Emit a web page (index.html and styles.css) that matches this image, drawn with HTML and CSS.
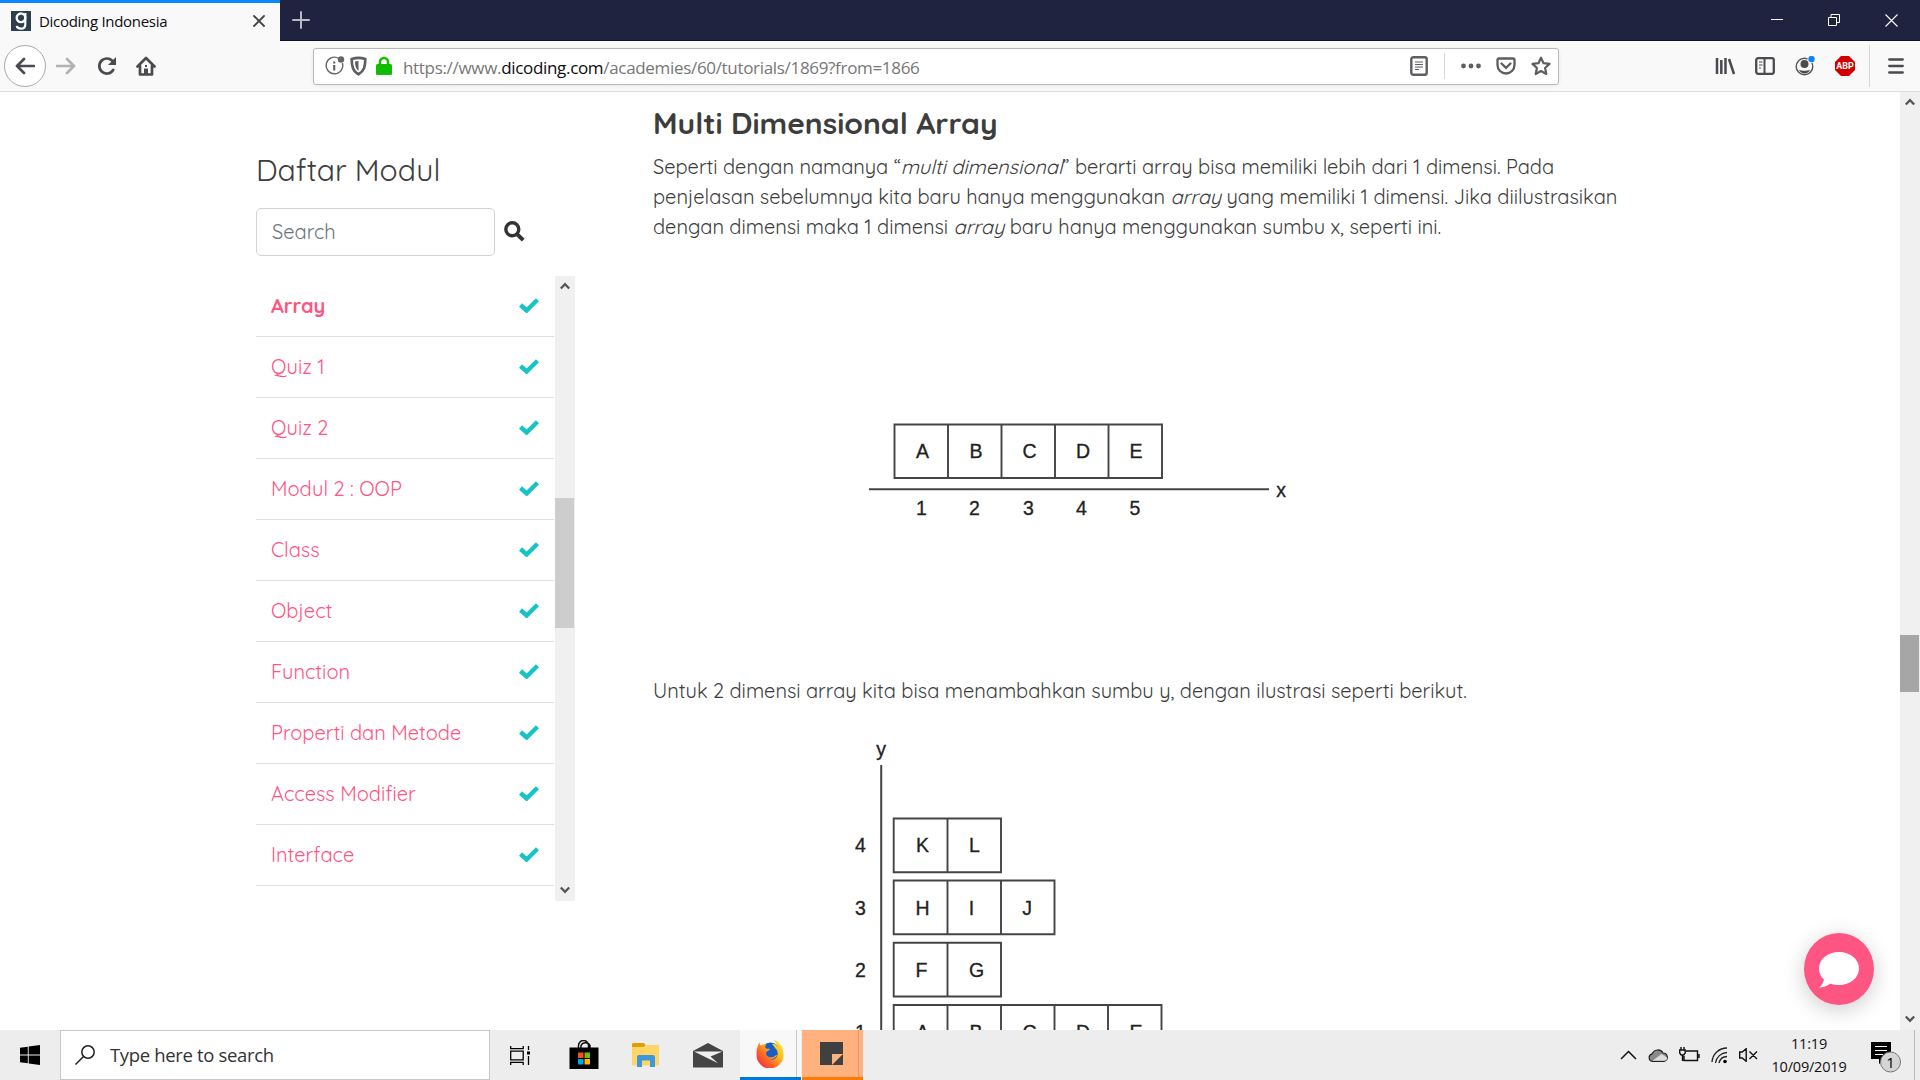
FILE: index.html
```html
<!DOCTYPE html>
<html lang="id">
<head>
<meta charset="utf-8">
<title>Dicoding Indonesia</title>
<link rel="stylesheet" href="styles.css">
</head>
<body>
<svg width="0" height="0" class="defs">
  <symbol id="check" viewBox="0 0 20 15"><path d="M1.500 7 7.600 12.500 18.500 1.700" fill="none" stroke="#16c3c6" stroke-width="4.400"/></symbol>
  <symbol id="up" viewBox="0 0 10 8"><path d="M.8 6.500 5 2.200 9.200 6.500" fill="none" stroke="#555" stroke-width="2.300"/></symbol>
</svg>
<header class="tabs">
  <div class="tab">
    <svg class="favicon" viewBox="0 0 20 20"><rect width="20" height="20" fill="#2d3e50"/><circle cx="10" cy="6.8" r="4.3" fill="none" stroke="#fff" stroke-width="2.4"/><path d="M14.3 2v11.5c0 3-1.8 4.2-4.3 4.2s-4-1-4.2-2.8" fill="none" stroke="#fff" stroke-width="2.2"/></svg>
    <span class="tab-title">Dicoding Indonesia</span>
    <svg class="tab-close" viewBox="0 0 12 12"><path d="M1 1l10 10M11 1 1 11" stroke="#444" stroke-width="1.8" stroke-linecap="round"/></svg>
  </div>
  <svg class="plus" viewBox="0 0 18 18"><path d="M9 1v16M1 9h16" stroke="#b9b9c4" stroke-width="2" stroke-linecap="round"/></svg>
  <div class="window-buttons">
    <svg width="12" height="12" viewBox="0 0 12 12"><path d="M0 5.5h12" stroke="#fff"/></svg>
    <svg width="12" height="12" viewBox="0 0 12 12"><path d="M.5 3.5h8v8h-8zM3 3V.5h8.500v8H9" fill="none" stroke="#fff"/></svg>
    <svg width="13" height="13" viewBox="0 0 13 13"><path d="M.5.5l12 12M12.500.5l-12 12" stroke="#fff" stroke-width="1.1"/></svg>
  </div>
</header>
<nav class="toolbar">
  <div class="back"><svg width="20" height="18" viewBox="0 0 20 18"><path d="M19 9H2M9 2 2 9l7 7" class="line"/></svg></div>
  <svg class="forward" width="20" height="18" viewBox="0 0 20 18"><path d="M1 9h17M11 2l7 7-7 7" class="line"/></svg>
  <svg class="reload" width="20" height="20" viewBox="0 0 20 20"><path d="M16.200 14a7.500 7.500 0 1 1 .5-7" class="line"/><path d="M19 1v8h-8z" fill="#4a4a4f"/></svg>
  <svg class="home" width="20" height="20" viewBox="0 0 20 20"><path d="M1.500 10.500 10 2l8.500 8.500M4 10v8.500h12V10" class="line"/><path d="M8 18v-5.500h4V18z" fill="#4a4a4f"/><path d="M9 10h2" stroke="#4a4a4f" stroke-width="2"/></svg>
  <div class="url-bar">
    <svg width="20" height="20" viewBox="0 0 20 20"><path d="M14 2.500A8.300 8.300 0 1 0 17.400 7" fill="none" stroke="#666" stroke-width="1.400"/><circle cx="16" cy="3.500" r="3.200" fill="#666"/><path d="M9.200 5.500v2M9.200 9v5.500" stroke="#666" stroke-width="2.200"/></svg>
    <svg class="shield" width="17" height="20" viewBox="0 0 17 20"><path d="M8.500 1.800c2.500 0 4.600.5 6.800 1.300 0 7-1 12-6.800 15.200C2.700 15.100 1.700 10.100 1.700 3.100c2.200-.8 4.300-1.300 6.800-1.300z" fill="none" stroke="#5e5e62" stroke-width="2.700"/><path d="M8.500 5v10C6 13 5 10 5 5.500z" fill="#5e5e62"/></svg>
    <svg class="lock" width="16" height="20" viewBox="0 0 16 20"><path d="M4 10V6a4 4 0 0 1 8 0v4" fill="none" stroke="#12bc00" stroke-width="2.500"/><rect y="8" width="16" height="11" rx="1.500" fill="#12bc00"/></svg>
    <span class="url">https://www.<b>dicoding.com</b>/academies/60/tutorials/1869?from=1866</span>
    <svg class="reader" width="18" height="20" viewBox="0 0 18 20"><rect x="1.300" y="1.300" width="15.400" height="17.400" rx="2" fill="none" stroke="#5e5e62" stroke-width="2.400"/><path d="M5 6h8M5 8.500h8M5 11h8M5 13.500h4" stroke="#5e5e62" stroke-width="1.200"/></svg>
    <i class="divider"></i>
    <svg class="dots" width="20" height="6" viewBox="0 0 20 6"><g fill="#5e5e62"><circle cx="2.500" cy="3" r="2.400"/><circle cx="10" cy="3" r="2.400"/><circle cx="17.500" cy="3" r="2.400"/></g></svg>
    <svg class="pocket" width="20" height="18" viewBox="0 0 20 18"><path d="M3 1.500h14q1.500 0 1.500 1.500v5a8.500 8.500 0 0 1-17 0V3Q1.500 1.500 3 1.500zM5.500 6.500 10 10.800l4.500-4.300" fill="none" stroke="#5e5e62" stroke-width="2.300" stroke-linecap="round"/></svg>
    <svg class="star" width="20" height="20" viewBox="0 0 20 20"><path d="M10 1.700l2.500 5.500 6 .7-4.400 4.100 1.200 6-5.300-3-5.300 3 1.200-6L1.500 7.900l6-.7z" fill="none" stroke="#5e5e62" stroke-width="2.200" stroke-linejoin="round"/></svg>
  </div>
  <div class="tools">
    <svg width="20" height="18" viewBox="0 0 20 18"><path d="M2 1v16M6.300 3v14M10.500 1v16M14 2l5 15" stroke="#4a4a4f" stroke-width="2.500" fill="none"/></svg>
    <svg width="20" height="18" viewBox="0 0 20 18"><rect x="1.200" y="1.200" width="17.600" height="15.600" rx="2" fill="none" stroke="#4a4a4f" stroke-width="2.300"/><path d="M9.500 1v16" stroke="#4a4a4f" stroke-width="2"/><path d="M4 5h3.500M4 8h3.500M4 11h2" stroke="#4a4a4f" stroke-width="1.200"/></svg>
    <svg width="20" height="20" viewBox="0 0 20 20"><circle cx="9.500" cy="10.500" r="8.300" fill="none" stroke="#555" stroke-width="1.400"/><circle cx="9.500" cy="8" r="4" fill="#4a4a4f"/><path d="M4 14c3 1 8 1 11 0-1 2.300-3 3.500-5.500 3.500S5 16.300 4 14z" fill="#4a4a4f"/><circle cx="16.500" cy="3" r="4" fill="#f9f9fa"/><circle cx="16.500" cy="3" r="3.200" fill="#0a84ff"/></svg>
    <div class="abp">ABP</div>
    <i class="divider tall"></i>
    <svg width="16" height="16" viewBox="0 0 16 16"><path d="M1.200 1.500h13.600M1.200 8h13.600M1.200 14.500h13.600" stroke="#4a4a4f" stroke-width="2.300" stroke-linecap="round"/></svg>
  </div>
</nav>
<div class="viewport">
  <main class="page">
    <aside class="sidebar">
      <h2>Daftar Modul</h2>
      <form class="search"><input placeholder="Search"><svg width="21" height="21" viewBox="0 0 21 21"><circle cx="8.300" cy="8.300" r="6.500" fill="none" stroke="#333" stroke-width="3.400"/><path d="M12.800 12.800l6.400 6.400" stroke="#333" stroke-width="4"/></svg></form>
      <div class="module-box">
        <ul class="modules">
          <li class="active"><span>Array</span><svg><use href="#check"/></svg></li>
          <li><span>Quiz 1</span><svg><use href="#check"/></svg></li>
          <li><span>Quiz 2</span><svg><use href="#check"/></svg></li>
          <li><span>Modul 2 : OOP</span><svg><use href="#check"/></svg></li>
          <li><span>Class</span><svg><use href="#check"/></svg></li>
          <li><span>Object</span><svg><use href="#check"/></svg></li>
          <li><span>Function</span><svg><use href="#check"/></svg></li>
          <li><span>Properti dan Metode</span><svg><use href="#check"/></svg></li>
          <li><span>Access Modifier</span><svg><use href="#check"/></svg></li>
          <li><span>Interface</span><svg><use href="#check"/></svg></li>
        </ul>
        <div class="scrollbar inner"><svg><use href="#up"/></svg><i></i><svg class="down"><use href="#up"/></svg></div>
      </div>
    </aside>
    <article class="content">
      <h1>Multi Dimensional Array</h1>
      <p>Seperti dengan namanya “<em>multi dimensional</em>” berarti array bisa memiliki lebih dari 1 dimensi. Pada<br>penjelasan sebelumnya kita baru hanya menggunakan <em>array</em> yang memiliki 1 dimensi. Jika diilustrasikan<br>dengan dimensi maka 1 dimensi <em>array</em> baru hanya menggunakan sumbu x, seperti ini.</p>
      <svg class="figure one" viewBox="860 400 440 140">
        <path class="cell" d="M894.500 424.500H1162V478H894.500zM948 424v54M1001.500 424v54M1055 424v54M1108.500 424v54"/><path class="axis" d="M869 489.200h400"/>
        <g><text x="922.500" y="458">A</text><text x="976" y="458">B</text><text x="1029.500" y="458">C</text><text x="1083" y="458">D</text><text x="1136" y="458">E</text>
        <text x="921.500" y="515">1</text><text x="974.500" y="515">2</text><text x="1028.500" y="515">3</text><text x="1081.500" y="515">4</text><text x="1135" y="515">5</text><text x="1281" y="497">x</text></g>
      </svg>
      <p class="second">Untuk 2 dimensi array kita bisa menambahkan sumbu y, dengan ilustrasi seperti berikut.</p>
      <svg class="figure two" viewBox="840 730 440 300">
        <path class="axis" d="M881.200 765v300"/>
        <path class="cell" d="M893.700 818.500h107.300v53.800H893.700zM947.500 818v54M893.700 880.500h160.800v53.800H893.700zM947.500 880v54M1001 880v54M893.700 942.700h107.300v53.800H893.700zM947.500 942v54M893.700 1005h267.800v53.800H893.700zM947.500 1005v54M1001 1005v54M1054.500 1005v54M1108 1005v54"/>
        <g><text x="881" y="756">y</text><text x="860.500" y="852">4</text><text x="860.500" y="914.500">3</text><text x="860.500" y="977">2</text><text x="860.500" y="1038.500">1</text>
        <text x="922.500" y="852">K</text><text x="974.500" y="852">L</text><text x="922.500" y="914.500">H</text><text x="971.500" y="914.500">I</text><text x="1027" y="914.500">J</text><text x="921.500" y="976.500">F</text><text x="976.500" y="976.500">G</text><text x="922.500" y="1038.500">A</text><text x="976" y="1038.500">B</text><text x="1029.500" y="1038.500">C</text><text x="1083" y="1038.500">D</text><text x="1136" y="1038.500">E</text></g>
      </svg>
    </article>
  </main>
  <div class="scrollbar outer"><svg><use href="#up"/></svg><i></i><svg class="down"><use href="#up"/></svg></div>
  <button class="chat"><svg width="42" height="37" viewBox="0 0 42 37"><path d="M21 1c11 0 20 7 20 16.500S32 34 21 34c-3 0-6-.5-8.500-1.500C9 35 5 36.500 1.500 36.500c2-2 4-5 4.500-8C2.500 25.500 1 22 1 17.500 1 8 10 1 21 1z" fill="#fff"/></svg></button>
</div>
<footer class="taskbar">
  <svg class="start" width="20" height="20" viewBox="0 0 20 20"><path d="M0 2.800 7.800 1.700V9.500H0zM8.700 1.500 20 0v9.500H8.700zM0 10.500h7.800v7.800L0 17.200zM8.700 10.500H20V20L8.700 18.400z"/></svg>
  <div class="type-here"><svg width="20" height="20" viewBox="0 0 20 20"><circle cx="13" cy="7" r="6.200" fill="none" stroke="#222" stroke-width="1.500"/><path d="M8.500 11.500.5 19.500" stroke="#222" stroke-width="1.500"/></svg><span>Type here to search</span></div>
  <svg class="taskview" width="21" height="19" viewBox="0 0 21 19"><path d="M.7 0v2.700h12.500V0M.7 5.200h12.500v8.600H.7zM.7 19v-2.700h12.500V19M18.500 0v4M18.500 10v9" fill="none" stroke="#000" stroke-width="1.300"/><path d="M17 5.500h3v3h-3z"/></svg>
  <svg class="store" width="30" height="30" viewBox="0 0 30 30"><path d="M9.500 8V5.500a5 5 0 0 1 10 0V8M12 8V5.500a5 5 0 0 1 9 0V8" fill="none" stroke="#111" stroke-width="1.500"/><path d="M.5 7.500h29V29H.5z"/><path fill="#f25022" d="M9 12.500h5.500v5.500H9z"/><path fill="#7fba00" d="M15.500 12.500H21v5.500h-5.500z"/><path fill="#00a4ef" d="M9 19h5.500v5.500H9z"/><path fill="#ffb900" d="M15.500 19H21v5.500h-5.500z"/></svg>
  <svg class="folder" width="28" height="24" viewBox="0 0 28 24"><path d="M0 2h27v20.500H0z" fill="#ffd666"/><path d="M1 0h11l1.500 2-1.500 2H0V1z" fill="#dfa000"/><path d="M5 24V14q0-2 2-2h14q2 0 2 2v10h-5v-6.500h-8V24z" fill="#3c97dc"/></svg>
  <svg class="mail" width="30" height="25" viewBox="0 0 30 25"><path d="M0 8 15 0l15 8v16.500H0z" fill="#444"/><path d="M1 8.500h28.500L17.500 13.500l7.500 6.700z" fill="#eee"/></svg>
  <div class="task firefox"><svg width="28" height="28" viewBox="0 0 28 28"><defs><linearGradient id="fox" x1="1" y1="0" x2="0" y2="1"><stop stop-color="#fff24a"/><stop offset=".35" stop-color="#ffbd20"/><stop offset=".65" stop-color="#ff6425"/><stop offset="1" stop-color="#e91854"/></linearGradient></defs><circle cx="14.500" cy="12.500" r="10" fill="#1460c8"/><path d="M16 4c2-1 4 0 6 3-1-3-3-5-4-7 6 2 10 8 9.500 15A13.500 13.500 0 0 1 .5 15C.3 9 2 5 3.500 2c0 2 .5 3 1.500 3.500C7 4 9 4 10.500 4.500 9 6 9 7 9.500 8c1 1 3 .5 4.500 1-1 2-3.500 2-4 4 0 3 3 5 6 4 3 0 3-2 5-2-1 3-5 5-8 4 7 3 12-6 6-11-1-2-2-3-3-4z" fill="url(#fox)"/></svg></div>
  <div class="task notes"><svg width="23" height="23" viewBox="0 0 23 23"><path d="M0 0h23v23H0z" fill="#404040"/><path d="M12 12h11L12 23z" fill="#ffb27d"/></svg></div>
  <div class="tray">
    <svg width="17" height="10" viewBox="0 0 17 10"><path d="M1 9l7.500-7.500L16 9" fill="none" stroke="#111" stroke-width="1.500"/></svg>
    <svg width="20" height="14" viewBox="0 0 20 14"><path d="M4.500 13.300a3.800 3.800 0 0 1-.3-7.500A6 6 0 0 1 15 5a4.200 4.200 0 0 1 1 8.300z" fill="#8a8a8a" stroke="#222" stroke-width="1.200"/><path d="M4.500 12.700 13.500 6l5.500 3.500q.5 3-3 3.200z" fill="#ddd"/></svg>
    <svg width="21" height="16" viewBox="0 0 21 16"><path d="M7 4h11.500v9.500H5V9M20 7v4M2 0v3M5 0v3M.7 3h5.500v3l-1.500 2H2.200L.7 6zM3.500 8v6" fill="none" stroke="#111" stroke-width="1.400"/></svg>
    <svg width="17" height="17" viewBox="0 0 17 17"><path d="M1 15A15 15 0 0 1 16 1M4.500 16A12 12 0 0 1 16 5.500M8 16a8.500 8.500 0 0 1 8-6.500" fill="none" stroke="#222" stroke-width="1.300"/><circle cx="14" cy="14.500" r="1.800"/></svg>
    <svg width="19" height="14" viewBox="0 0 19 14"><path d="M.7 4h2.500l4-3.300v12.600L3.200 10H.7zM10.500 3.500l7.500 7.500M18 3.500 10.500 11" fill="none" stroke="#111" stroke-width="1.400"/></svg>
    <div class="clock"><span>11:19</span><span>10/09/2019</span></div>
    <svg class="notify" width="32" height="31" viewBox="0 0 32 31"><path d="M0 0h20v17h-6l-6 5v-5H0z"/><path d="M4 4.500h12M4 8.500h12M4 12.500h8" stroke="#fff" stroke-width="1.200"/><circle cx="19.500" cy="20" r="10" fill="#d5d5d5" stroke="#777"/><text x="19.500" y="25.500">1</text></svg>
    <i class="peek"></i>
  </div>
</footer>
</body>
</html>
```
FILE: styles.css
```css
* { box-sizing: border-box; }
body { margin: 0; width: 1920px; height: 1080px; overflow: hidden; display: flex; flex-direction: column; background: #fff; font-family: "Open Sans", sans-serif; }
svg { flex: none; display: block; }
.defs { display: none; }
.tabs { height: 41px; flex: none; background: #202340; border-bottom: 1px solid #10122a; display: flex; align-items: flex-start; }
.tab { width: 280px; height: 41px; background: #f9f9fa; border-top: 3px solid #0a84ff; display: flex; align-items: center; padding: 0 15px 3px 11px; }
.favicon { width: 20px; height: 20px; }
.tab-title { margin-left: 8px; font-size: 15px; letter-spacing: -.3px; color: #0c0c0d; white-space: nowrap; }
.tab-close { width: 12px; height: 12px; margin-left: auto; }
.plus { width: 18px; height: 18px; margin: 11px 0 0 12px; }
.window-buttons { margin: 14px 22px 0 auto; display: flex; gap: 45px; }
.toolbar { height: 51px; flex: none; background: #f9f9fa; border-bottom: 1px solid #dcdcdc; display: flex; align-items: center; padding-left: 4px; }
.line { fill: none; stroke: #4a4a4f; stroke-width: 2.700; stroke-linecap: round; stroke-linejoin: round; }
.back { width: 42px; height: 42px; border: 1px solid #aaa; border-radius: 50%; background: #fff; display: grid; place-items: center; }
.forward { margin-left: 10px; opacity: .4; }
.reload { margin-left: 21px; }
.home { margin-left: 19px; }
.url-bar { width: 1246px; height: 37px; margin-left: 157px; border: 1px solid #b9b9b9; border-radius: 3px; background: #fff; box-shadow: 0 1px 4px #0001; display: flex; align-items: center; padding: 0 7px 0 11px; }
.shield { margin-left: 5px; }
.lock { margin-left: 9px; }
.url { margin-left: 11px; font-size: 17px; letter-spacing: -.32px; color: #777; white-space: nowrap; padding-top: 2px; }
.url b { font-weight: 400; color: #0c0c0d; }
.reader { margin-left: auto; }
.divider { width: 1px; height: 26px; background: #d7d7db; margin-left: 16px; }
.dots { margin-left: 16px; }
.pocket { margin-left: 15px; }
.star { margin-left: 15px; }
.tools { margin: 0 16px 0 auto; display: flex; align-items: center; gap: 20px; }
.divider.tall { height: 42px; margin-left: -6px; margin-right: -2px; }
.abp { width: 20px; height: 20px; background: #d10000; clip-path: polygon(30% 0, 70% 0, 100% 30%, 100% 70%, 70% 100%, 30% 100%, 0 70%, 0 30%); color: #fff; font: bold 9px/20px Roboto, sans-serif; text-align: center; }
.viewport { height: 938px; flex: none; position: relative; display: flex; overflow: hidden; }
.page { flex: 1; display: flex; padding-left: 256px; font-family: Quicksand, Lato, sans-serif; color: #3d3d3d; }
.sidebar { width: 319px; flex: none; padding-top: 58px; }
.sidebar h2 { margin: 0; font-weight: 400; font-size: 30px; line-height: 40px; height: 58px; }
.search { display: flex; align-items: center; gap: 9px; margin: 0; }
.search svg { margin-top: -2px; }
.search input { width: 239px; height: 48px; border: 1px solid #ced4da; border-radius: 5px; padding: 0 15px 2px; font: 20px Quicksand, Lato, sans-serif; }
.search input::placeholder { color: #6c757d; opacity: 1; }
.module-box { margin-top: 20px; height: 625px; display: flex; justify-content: space-between; overflow: hidden; }
.modules { list-style: none; margin: 0; padding: 0; width: 298px; }
.modules li { height: 61px; border-bottom: 1px solid #dcdfe4; display: flex; align-items: center; justify-content: space-between; padding: 0 15px 2px; font-size: 20px; color: #ff5583; }
.modules li svg { width: 20px; height: 15px; }
.modules .active { font-weight: 700; }
.scrollbar { width: 20px; background: #f0f0f0; display: flex; flex-direction: column; align-items: center; }
.scrollbar svg { width: 10px; height: 8px; margin-top: 6px; }
.scrollbar .down { transform: rotate(180deg); margin: auto 0 7px; }
.scrollbar i { width: 19px; margin-right: 1px; background: #cdcdcd; }
.inner svg { margin-right: 1px; }
.inner i { margin-top: 208px; height: 130px; }
.outer i { margin-top: 529px; height: 57px; background: #a6a6a6; }
.content { margin-left: 78px; flex: 1; padding-top: 11px; }
.content h1 { margin: 0; font-size: 30px; line-height: 40px; }
.content p { margin: 9px 0 0; font-size: 20px; line-height: 30px; letter-spacing: -.02px; white-space: nowrap; height: 90px; }
.figure { display: block; }
.one { width: 440px; height: 140px; margin: 158px 0 0 207px; }
.content .second { margin-top: 136px; height: 30px; }
.two { width: 440px; height: 300px; margin: 24px 0 0 187px; }
.figure .cell, .figure .axis { fill: none; stroke: #444; stroke-width: 1.900; }
.figure .axis { stroke-width: 2; }
.figure text { font: 19.500px "Liberation Sans", sans-serif; text-anchor: middle; fill: #222; stroke: #222; stroke-width: .3; }
.chat { position: absolute; left: 1804px; top: 841px; width: 70px; height: 72px; padding: 0; border: 0; border-radius: 50%; background: #ff5583; box-shadow: 0 5px 22px #0003; display: grid; place-items: center; }
.taskbar { height: 50px; flex: none; background: #ededed; display: flex; align-items: center; }
.start { margin-left: 20px; }
.type-here { width: 430px; height: 50px; margin-left: 20px; border: 1px solid #c8c8c8; background: #fff; display: flex; align-items: center; padding-left: 14px; gap: 15px; font-size: 18.500px; letter-spacing: -.34px; color: #333; }
.type-here span { padding-bottom: 2px; }
.taskview { margin-left: 20px; }
.store { margin-left: 38px; }
.folder { margin-left: 33px; }
.mail { margin-left: 33px; }
.task { height: 50px; display: grid; place-items: center; }
.firefox { width: 61px; margin-left: 17px; background: linear-gradient(#c8c8c8, #c8c8c8) 56px 0 / 1px 47px no-repeat #f8f8f8; border-bottom: 3px solid #0078d7; padding-right: 2px; }
.notes { width: 61px; margin-left: 1px; background: linear-gradient(#d99a70, #d99a70) 56px 0 / 1px 47px no-repeat #ffb27d; border-bottom: 3px solid #ff7800; padding-right: 2px; }
.tray { margin-left: auto; height: 50px; display: flex; align-items: center; gap: 11px; }
.clock { width: 80px; display: flex; flex-direction: column; align-items: center; font-size: 14.500px; line-height: 23px; letter-spacing: -.2px; color: #111; padding-bottom: 1px; }
.notify { margin: 5px 0 0 11px; }
.notify text { font: 15px "Open Sans", sans-serif; text-anchor: middle; }
.peek { width: 1px; height: 50px; background: #bbb; margin-right: 5px; }
```
